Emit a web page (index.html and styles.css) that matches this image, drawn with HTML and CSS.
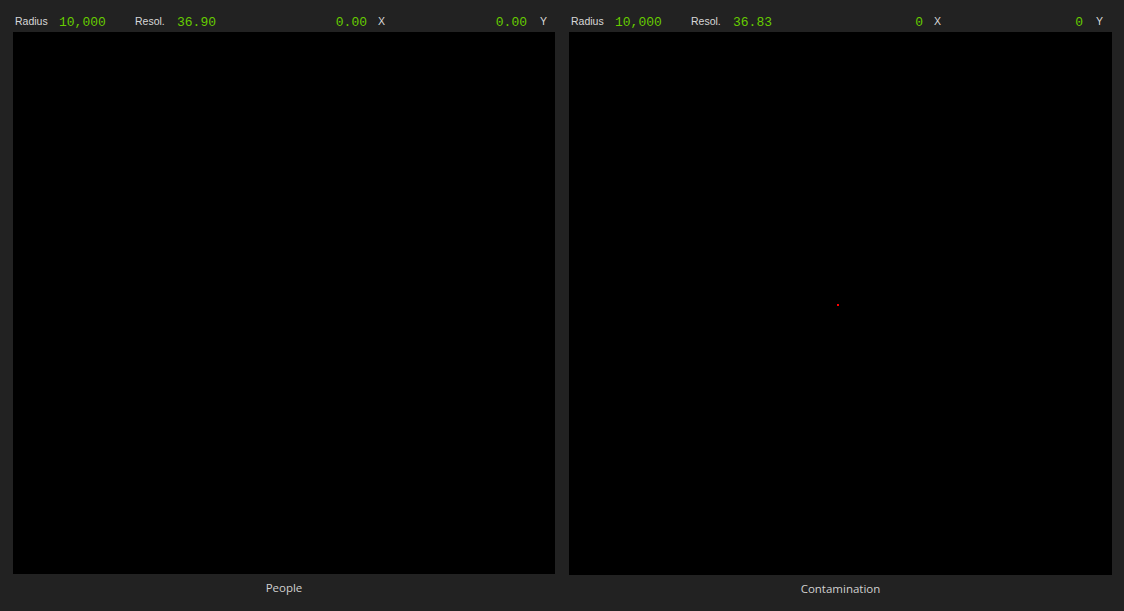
FILE: index.html
```html
<!DOCTYPE html>
<html>
<head>
<meta charset="utf-8">
<link rel="stylesheet" href="styles.css">
</head>
<body>
<div class="app">
  <section class="panel">
    <div class="hdr">
      <span class="lbl">Radius</span>
      <span class="val">10,000</span>
      <span class="lbl">Resol.</span>
      <span class="val">36.90</span>
      <span class="val right">0.00</span>
      <span class="lbl axis-x">X</span>
      <span class="val right">0.00</span>
      <span class="lbl axis-y">Y</span>
    </div>
    <div class="canvas c1"></div>
    <div class="caption">People</div>
  </section>
  <section class="panel">
    <div class="hdr">
      <span class="lbl">Radius</span>
      <span class="val">10,000</span>
      <span class="lbl">Resol.</span>
      <span class="val">36.83</span>
      <span class="val right">0</span>
      <span class="lbl axis-x">X</span>
      <span class="val right">0</span>
      <span class="lbl axis-y">Y</span>
    </div>
    <div class="canvas c2"><span class="dot"></span></div>
    <div class="caption cap2">Contamination</div>
  </section>
</div>
</body>
</html>
```
FILE: styles.css
```css
html, body {
  margin: 0;
  padding: 0;
  background: #222222;
  width: 1124px;
  height: 611px;
  overflow: hidden;
}
.app {
  display: flex;
  gap: 14px;
  padding-left: 13px;
}
.panel {
  display: flex;
  flex-direction: column;
}
.hdr {
  height: 32px;
  display: grid;
  grid-template-columns: 44px 76px 42px 96px 94px 46px 114px auto;
  align-items: end;
  padding-left: 2px;
  box-sizing: border-box;
  padding-bottom: 4px;
}
.lbl {
  font-family: "Liberation Sans", Arial, sans-serif;
  font-size: 10.5px;
  color: #d8d8d8;
  line-height: 13px;
}
.val {
  font-family: "Liberation Mono", "Courier New", monospace;
  font-size: 13px;
  color: #66cc00;
  line-height: 13px;
  position: relative;
  top: 1px;
}
.right {
  text-align: right;
}
.axis-x {
  padding-left: 11px;
}
.axis-y {
  padding-left: 13px;
}
.canvas {
  background: #000;
  position: relative;
}
.c1 {
  width: 542px;
  height: 542px;
}
.c2 {
  width: 543px;
  height: 543px;
}
.dot {
  position: absolute;
  left: 268px;
  top: 272px;
  width: 2px;
  height: 2px;
  background: #ff0000;
}
.caption {
  font-family: "Open Sans", sans-serif;
  font-size: 11.5px;
  color: #d0d0d0;
  text-align: center;
  padding-top: 6px;
  line-height: 15px;
}
.cap2 {
  padding-top: 6px;
}
```
